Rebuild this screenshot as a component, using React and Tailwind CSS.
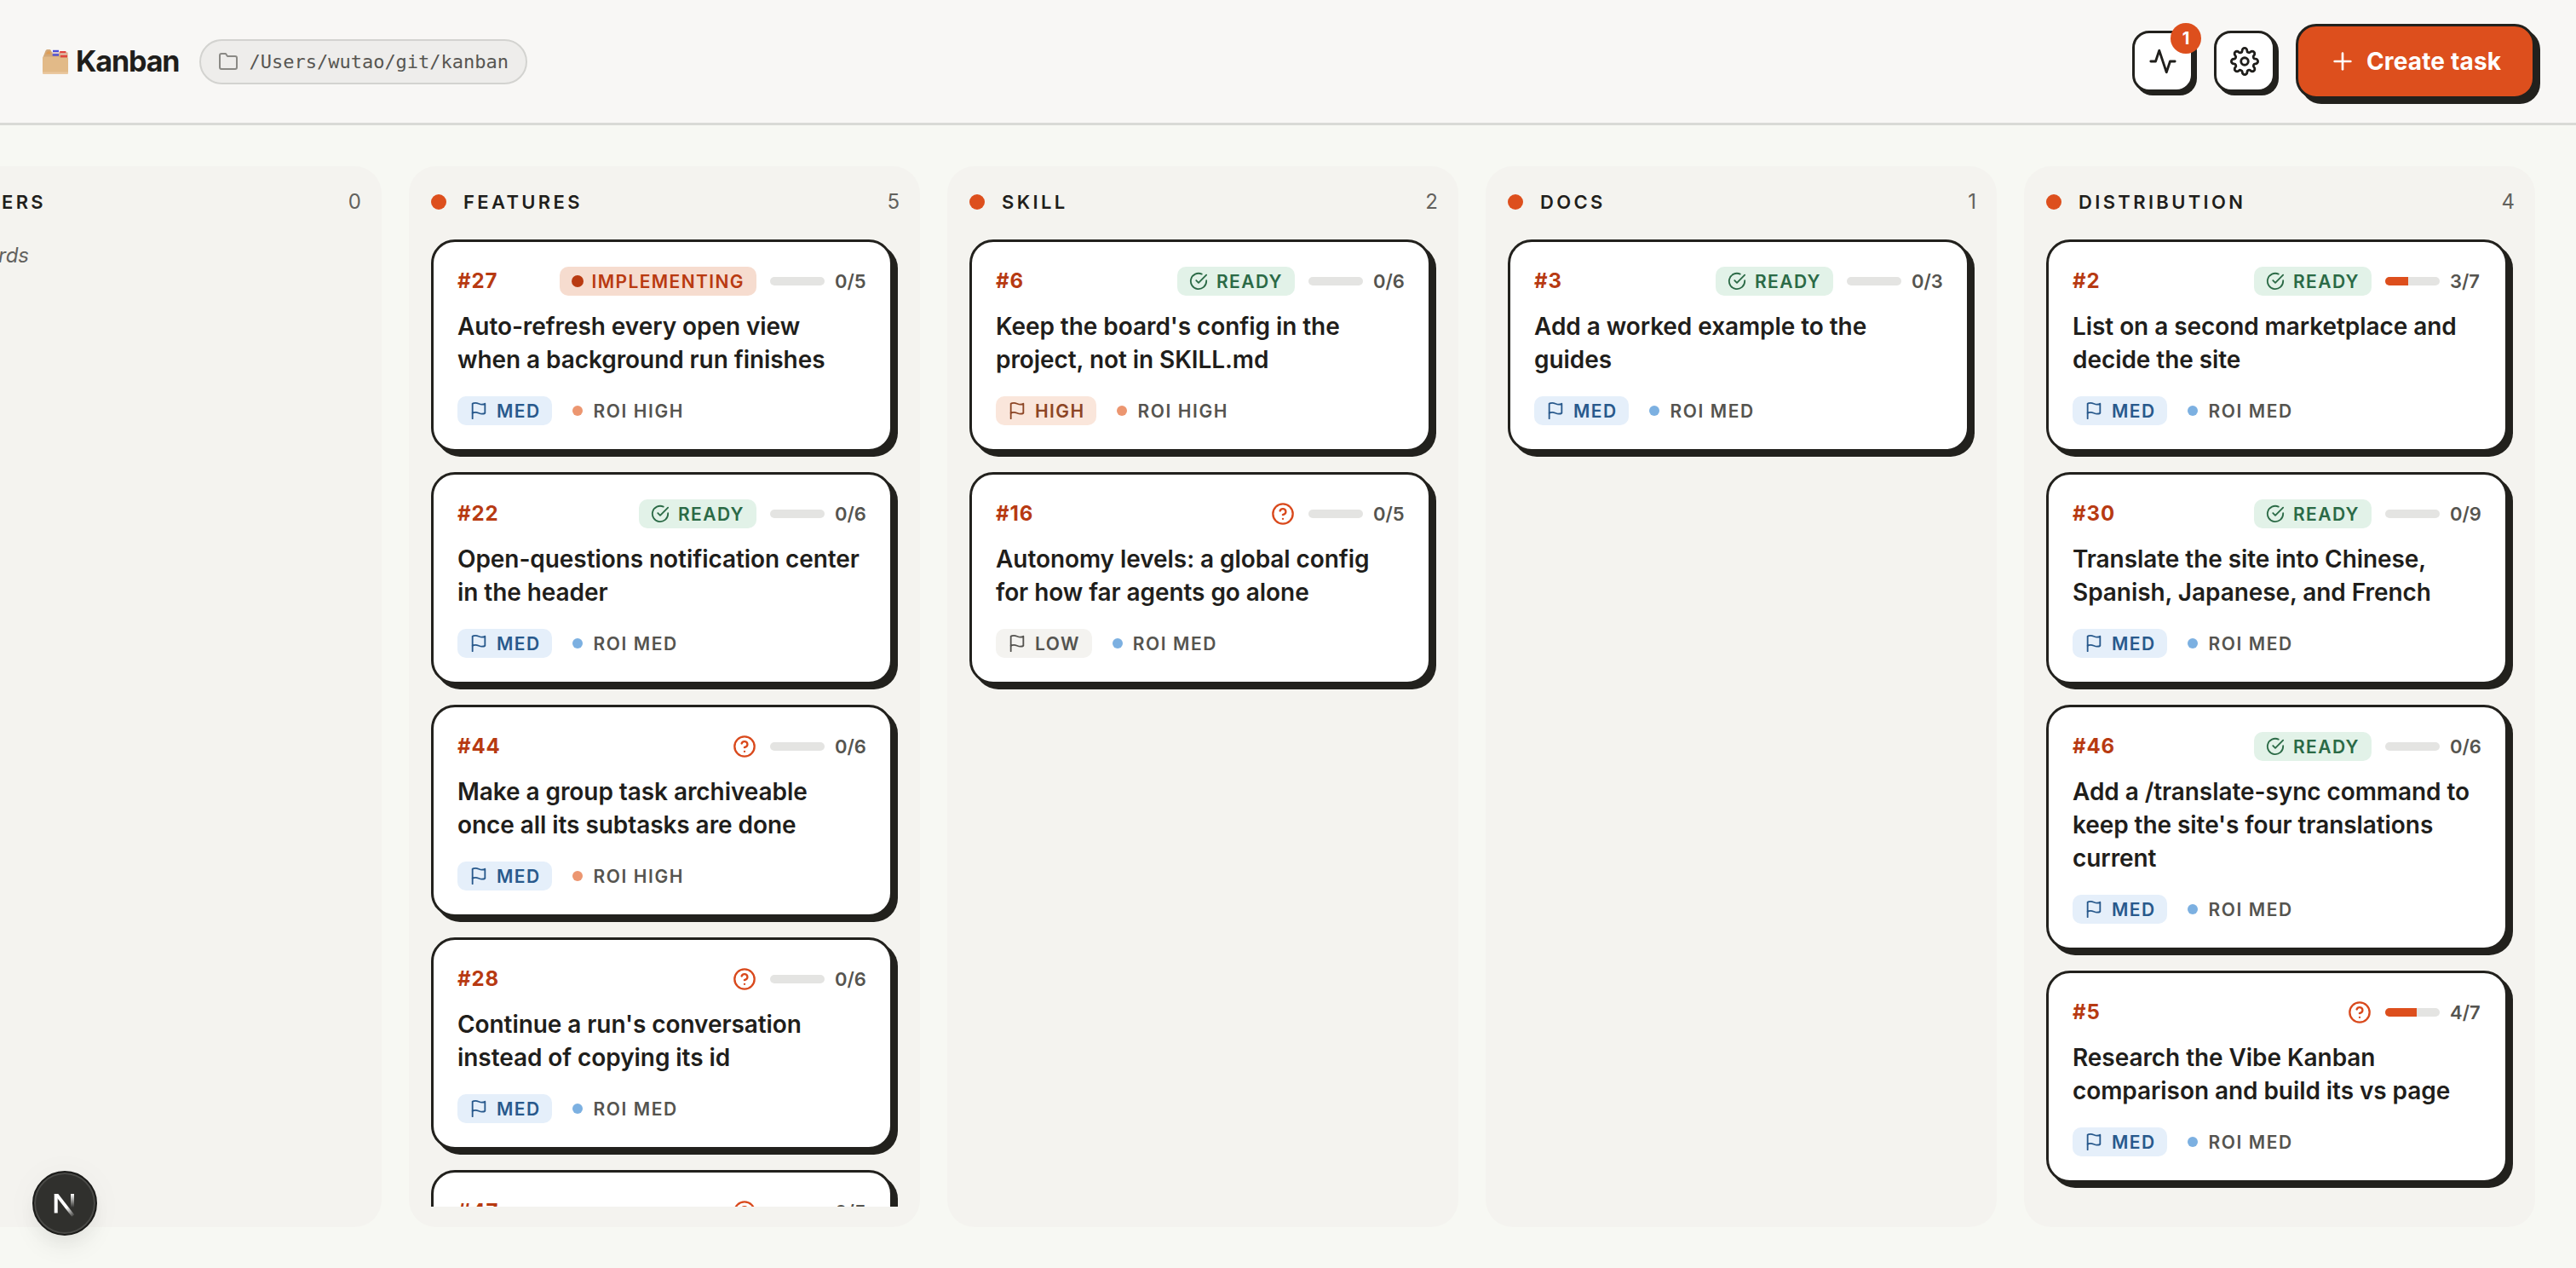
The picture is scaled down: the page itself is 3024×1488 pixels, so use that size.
import React from 'react';
import { FiActivity, FiCheckCircle, FiFlag, FiFolder, FiHelpCircle, FiPlus, FiSettings } from 'react-icons/fi';

const columns = [
  { name: 'ADAPTERS', offscreen: true, cards: [] },
  {
    name: 'FEATURES',
    cards: [
      { id: 27, status: 'implementing', done: 0, total: 5, title: 'Auto-refresh every open view when a background run finishes', priority: 'MED', roi: 'HIGH' },
      { id: 22, status: 'ready', done: 0, total: 6, title: 'Open-questions notification center in the header', priority: 'MED', roi: 'MED' },
      { id: 44, status: 'question', done: 0, total: 6, title: 'Make a group task archiveable once all its subtasks are done', priority: 'MED', roi: 'HIGH' },
      { id: 28, status: 'question', done: 0, total: 6, title: "Continue a run's conversation instead of copying its id", priority: 'MED', roi: 'MED' },
      { id: 47, status: 'question', done: 0, total: 5, title: '', priority: 'MED', roi: 'MED' },
    ],
  },
  {
    name: 'SKILL',
    cards: [
      { id: 6, status: 'ready', done: 0, total: 6, title: "Keep the board's config in the project, not in SKILL.md", priority: 'HIGH', roi: 'HIGH' },
      { id: 16, status: 'question', done: 0, total: 5, title: 'Autonomy levels: a global config for how far agents go alone', priority: 'LOW', roi: 'MED' },
    ],
  },
  {
    name: 'DOCS',
    cards: [
      { id: 3, status: 'ready', done: 0, total: 3, title: 'Add a worked example to the guides', priority: 'MED', roi: 'MED' },
    ],
  },
  {
    name: 'DISTRIBUTION',
    cards: [
      { id: 2, status: 'ready', done: 3, total: 7, title: 'List on a second marketplace and decide the site', priority: 'MED', roi: 'MED' },
      { id: 30, status: 'ready', done: 0, total: 9, title: 'Translate the site into Chinese, Spanish, Japanese, and French', priority: 'MED', roi: 'MED' },
      { id: 46, status: 'ready', done: 0, total: 6, title: "Add a /translate-sync command to keep the site's four translations current", priority: 'MED', roi: 'MED' },
      { id: 5, status: 'question', done: 4, total: 7, title: 'Research the Vibe Kanban comparison and build its vs page', priority: 'MED', roi: 'MED' },
    ],
  },
];

const priorityStyles = {
  HIGH: 'bg-[#fae6db] text-[#8c4524]',
  MED: 'bg-[#e5effa] text-[#28598c]',
  LOW: 'bg-[#f4f3f0] text-[#54534f]',
};

const roiDots = {
  HIGH: 'bg-[#ec9670]',
  MED: 'bg-[#7cb0e1]',
};

const FileBoxLogo = () => (
  <svg viewBox="0 0 30 30" className="h-[30px] w-[30px] shrink-0">
    <path d="M0.5 10 3.5 2.5Q4 1 5.500 1H8.500Q9.500 1 10 2.500L11 4.500H29.500V13H0.500Z" fill="#d2a878" />
    <path d="M4 6.500Q5 3 7.500 3Q9.500 3 9.500 6.500Z" fill="#dd9c55" />
    <rect x="12" y="1.800" width="7" height="2.300" fill="#4b4fd8" />
    <rect x="11.500" y="4.100" width="8" height="2.200" fill="#d9c7cf" />
    <rect x="11.700" y="6.300" width="7.300" height="2.300" fill="#4b4fd8" />
    <rect x="20.200" y="3" width="7.200" height="2.500" fill="#e0463f" />
    <rect x="20.500" y="5.500" width="8" height="2" fill="#e3c2b4" />
    <rect x="21" y="7.700" width="8" height="2.600" fill="#e0463f" />
    <path d="M0 11Q0 9.500 1.500 9.500H19L21 11H30V28.500Q30 29.800 28.700 29.800H1.300Q0 29.800 0 28.500Z" fill="#e2ba88" />
    <path d="M0 27.500H30V28.500Q30 29.800 28.700 29.800H1.300Q0 29.800 0 28.500Z" fill="#eac89e" />
  </svg>
);

const Header = () => (
  <header className="flex h-[147px] shrink-0 items-center justify-between border-b-[3px] border-[#d9dad6] bg-[#f8f7f5] pr-12 pl-[50px]">
    <div className="flex items-center">
      <FileBoxLogo />
      <h1 className="ml-[9px] text-[34px] leading-[52px] font-bold tracking-[-1.1px]">Kanban</h1>
      <div className="ml-6 flex h-[53px] items-center gap-3 rounded-full border-2 border-[#d3d3d0] bg-[#eeedeb] px-5 font-['DejaVu_Sans_Mono',monospace] text-[22px] text-[#575652]">
        <FiFolder className="h-6 w-6 text-[#8a8985]" />
        <span>/Users/wutao/git/kanban</span>
      </div>
    </div>
    <div className="flex items-center gap-6">
      <button className="relative flex h-[72px] w-[72px] items-center justify-center rounded-[20px] border-[3px] border-[#22211d] bg-white shadow-[4px_4px_0_#22211d]">
        <FiActivity className="h-[34px] w-[34px]" />
        <span className="absolute -top-3 -right-3 flex h-9 w-9 items-center justify-center rounded-full bg-[#dd4f1d] text-xl leading-none font-bold text-white">1</span>
      </button>
      <button className="flex h-[72px] w-[72px] items-center justify-center rounded-[20px] border-[3px] border-[#22211d] bg-white shadow-[4px_4px_0_#22211d]">
        <FiSettings className="h-[34px] w-[34px]" />
      </button>
      <button className="flex h-[88px] w-[281px] items-center gap-3 rounded-3xl border-[3px] border-[#22211d] bg-[#dd4f1d] pl-9 text-[28px] font-bold tracking-[0.15px] whitespace-nowrap text-white shadow-[6px_6px_0_#22211d]">
        <FiPlus className="h-8 w-8" />
        Create task
      </button>
    </div>
  </header>
);

const Status = ({ status }) => {
  if (status === 'question') {
    return <FiHelpCircle className="h-7 w-7 text-[#d9491c]" />;
  }
  if (status === 'implementing') {
    return (
      <span className="flex h-[34px] items-center gap-2.5 rounded-[10px] bg-[#f6dccf] px-3.5 text-[21px] leading-none font-semibold tracking-[1.4px] text-[#b93a11]">
        <span className="h-3.5 w-3.5 rounded-full bg-[#b93a11]" />
        IMPLEMENTING
      </span>
    );
  }
  return (
    <span className="flex h-[34px] items-center gap-2.5 rounded-[10px] bg-[#e2f2e8] px-3.5 text-[21px] leading-none font-semibold tracking-[1.4px] text-[#2b6a46]">
      <FiCheckCircle className="h-[22px] w-[22px]" />
      READY
    </span>
  );
};

const Card = ({ card }) => (
  <article className="min-h-[249px] shrink-0 rounded-[28px] border-[3px] border-[#22211d] bg-white p-7 shadow-[6px_6px_0_#22211d]">
    <div className="flex h-9 items-center justify-between">
      <span className="text-2xl font-bold tracking-[0.9px] text-[#b73a12]">#{card.id}</span>
      <div className="flex items-center gap-4">
        <Status status={card.status} />
        <div className="flex items-center gap-3">
          <div className="h-2.5 w-16 overflow-hidden rounded-full bg-[#e4e4e2]">
            <div className="h-full bg-[#dd4f1d]" style={{ width: `${(card.done / card.total) * 100}%` }} />
          </div>
          <span className="w-[37px] text-[22px] font-semibold whitespace-nowrap text-[#55544f]">{card.done}/{card.total}</span>
        </div>
      </div>
    </div>
    <h3 className="mt-4 text-[28px] leading-[39.2px] font-semibold tracking-[-0.07px]">{card.title}</h3>
    <div className="mt-[22.6px] flex h-[34px] items-center gap-6 text-[21px] leading-none">
      <span className={`flex h-[34px] items-center gap-2.5 rounded-[10px] px-3.5 font-semibold tracking-[1.4px] ${priorityStyles[card.priority]}`}>
        <FiFlag className="h-[22px] w-[22px]" />
        {card.priority}
      </span>
      <span className="flex items-center gap-3 font-semibold tracking-[1.6px] text-[#55544f]">
        <span className={`h-3 w-3 rounded-full ${roiDots[card.roi]}`} />
        ROI {card.roi}
      </span>
    </div>
  </article>
);

const Column = ({ column }) => (
  <section className="flex w-[600px] shrink-0 flex-col rounded-[32px] bg-[#f4f3ef] py-6 pr-6 pl-[26px]">
    <div className="mb-[26px] flex h-9 shrink-0 items-center">
      <span className="h-[18px] w-[18px] rounded-full bg-[#dd4f1d]" />
      <h2 className={`ml-5 text-[22px] font-semibold tracking-[3.35px] ${column.offscreen ? 'flex w-[142px] justify-end' : ''}`}>{column.name}</h2>
      <span className="ml-auto text-2xl text-[#62615d]">{column.cards.length}</span>
    </div>
    <div className="flex min-h-0 flex-1 flex-col gap-6 overflow-hidden pr-2">
      {column.cards.length === 0 && (
        <p className="w-[160px] text-right text-2xl leading-[38px] text-[#62615d] italic">No cards</p>
      )}
      {column.cards.map((card) => <Card key={card.id} card={card} />)}
    </div>
  </section>
);

// Round dev tools button in the bottom left corner
const DevBadge = () => (
  <div className="fixed bottom-[38px] left-[38px] flex h-[76px] w-[76px] items-center justify-center rounded-full border-2 border-[#1b1b19] bg-[#30302d] shadow-[inset_0_0_0_2px_#4a4a47,0_16px_32px_-8px_rgba(0,0,0,0.1),0_4px_40px_rgba(0,0,0,0.04)]">
    <svg viewBox="0 0 76 76" className="h-[76px] w-[76px] shrink-0" fill="none">
      <defs>
        <linearGradient id="stem" x1="0" y1="27" x2="0" y2="43" gradientUnits="userSpaceOnUse">
          <stop stopColor="#fff" />
          <stop offset="1" stopColor="#fff" stopOpacity="0" />
        </linearGradient>
        <linearGradient id="slash" x1="40" y1="43" x2="49" y2="54" gradientUnits="userSpaceOnUse">
          <stop stopColor="#fff" />
          <stop offset="1" stopColor="#fff" stopOpacity="0" />
        </linearGradient>
      </defs>
      <rect x="25.700" y="27" width="4" height="22.500" fill="#fff" />
      <path d="M25.700 27H30.300L49.300 51.500 46.300 53.800 26.500 28.500Z" fill="url(#slash)" />
      <rect x="45" y="27" width="4" height="16.500" fill="url(#stem)" />
    </svg>
  </div>
);

export default function App() {
  return (
    <div className="flex h-screen flex-col overflow-hidden bg-[#f7f8f3] font-[Inter,sans-serif] text-[#1f1e1b]">
      <Header />
      <main className="flex min-h-0 flex-1 justify-end gap-8 overflow-hidden p-12">
        {columns.map((column) => <Column key={column.name} column={column} />)}
      </main>
      <DevBadge />
    </div>
  );
}
